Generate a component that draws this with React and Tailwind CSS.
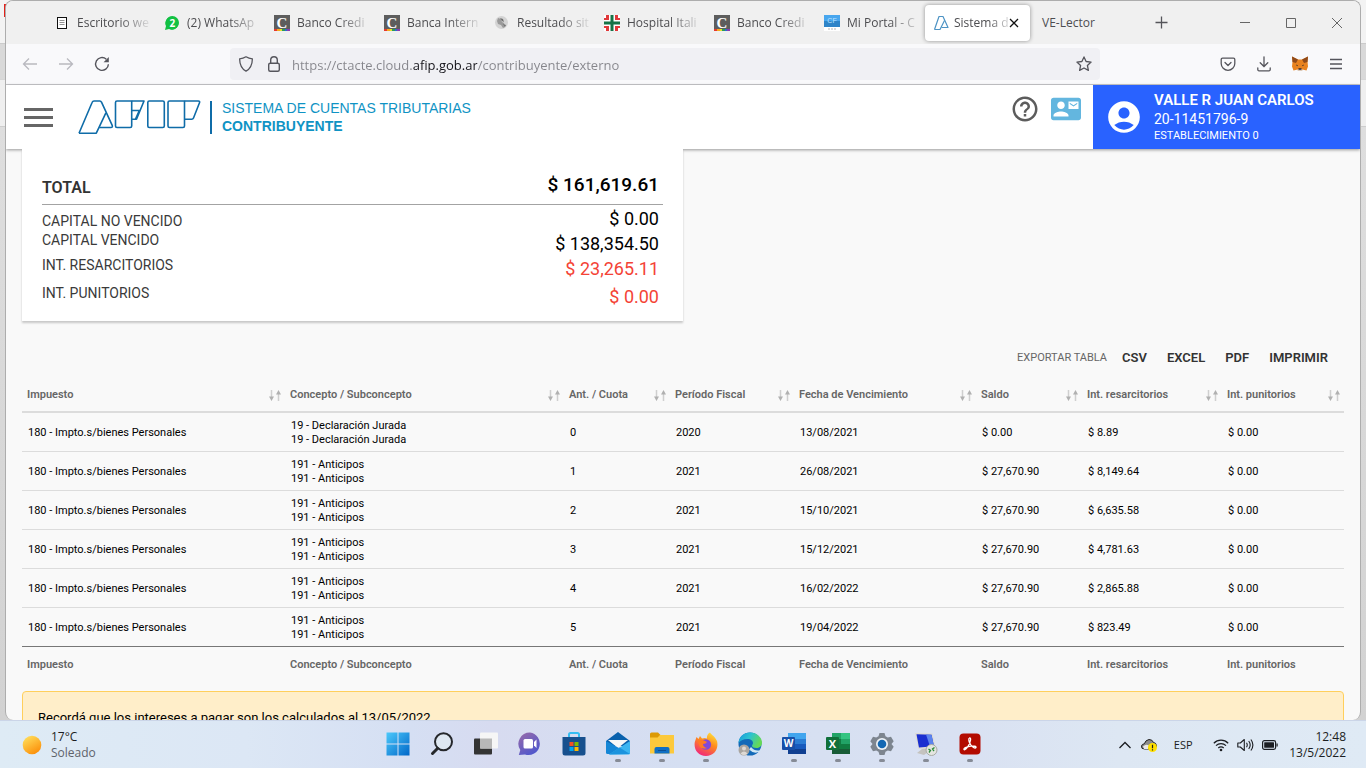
import React from "react";
import { MdHelpOutline, MdContactMail, MdAccountCircle } from "react-icons/md";

const UI = "font-['Open_Sans','Noto_Sans',sans-serif]";

/* ---------- favicons ---------- */

function DocIcon() {
  return (
    <svg width="16" height="16" viewBox="0 0 16 16" fill="none">
      <rect x="3.500" y="2.500" width="9" height="11" fill="#fff" stroke="#111" strokeWidth="1" />
      <path d="M5.500 5.500h5M5.500 7.500h5M5.500 9.500h5" stroke="#777" strokeWidth=".8" />
    </svg>
  );
}

function WhatsIcon() {
  return (
    <svg width="16" height="16" viewBox="0 0 16 16">
      <path d="M1 15l1-4a6.500 6.500 0 1 1 3 3z" fill="#12c143" />
      <circle cx="8.300" cy="7.800" r="6.700" fill="#12c143" />
      <text x="8.300" y="11.500" textAnchor="middle" fontSize="10" fontWeight="700" fill="#fff" fontFamily="Open Sans, sans-serif">2</text>
    </svg>
  );
}

function CrediIcon() {
  return (
    <svg width="16" height="16" viewBox="0 0 16 16">
      <rect width="16" height="16" fill="#5d5d5d" />
      <text x="8" y="12.500" textAnchor="middle" fontSize="15" fontWeight="700" fill="#fff" fontFamily="Liberation Serif, serif">C</text>
      <path d="M0 14h3v2H0z" fill="#e5392f" />
      <path d="M3 14h3v2H3z" fill="#f6a81c" />
      <path d="M6 14h2v2H6z" fill="#e8df2a" />
      <path d="M8 14h3v2H8z" fill="#2a9a5b" />
      <path d="M11 14h2v2h-2z" fill="#2d6bd0" />
      <path d="M13 14h3v2h-3z" fill="#8a3db0" />
    </svg>
  );
}

function GlobeIcon() {
  return (
    <svg width="16" height="16" viewBox="0 0 16 16">
      <circle cx="7.500" cy="7.500" r="6.500" fill="#d3d3d3" />
      <path d="M4 3l3 1 1 3 2 1 1 4-2 1-2-3-3-1-1-3z" fill="#9a9a9a" />
      <path d="M6 3l3 1 1 3-2-1zM9 9l3 1-1 2z" fill="#6f6f6f" />
    </svg>
  );
}

function HospitalIcon() {
  return (
    <svg width="16" height="16" viewBox="0 0 16 16">
      <rect width="16" height="16" fill="#fff" />
      <path d="M2 0h3v5H0V3h2zM11 0h3v3h2v2h-5zM0 11h5v5H2v-3H0zM11 11h5v2h-2v3h-3z" fill="#e0393b" />
      <path d="M6.500 0h3v6.500H16v3H9.500V16h-3V9.500H0v-3h6.500z" fill="#157347" />
    </svg>
  );
}

function PortalIcon() {
  return (
    <svg width="16" height="16" viewBox="0 0 16 16">
      <rect width="16" height="16" fill="#fff" />
      <rect width="16" height="6" fill="#48a6ee" />
      <rect y="6" width="16" height="6" fill="#2e84c8" />
      <text x="8" y="8" textAnchor="middle" fontSize="7" fill="#bfe4ff" fontFamily="Liberation Sans, sans-serif">CF</text>
      <path d="M4 14h2M7 14h2M10 14h2" stroke="#b5b5b5" />
    </svg>
  );
}

function AfipIcon() {
  return (
    <svg width="16" height="16" viewBox="0 0 16 16" fill="none" stroke="#4d93c4" strokeWidth="1.200" strokeLinejoin="round">
      <path d="M1.500 14.500L6 1.500h4L15 12.500H8.500" />
      <path d="M1.500 14.500H7l4.500-9" />
    </svg>
  );
}

const tabs = [
  { icon: DocIcon, text: "Escritorio we" },
  { icon: WhatsIcon, text: "(2) WhatsAp" },
  { icon: CrediIcon, text: "Banco Credi" },
  { icon: CrediIcon, text: "Banca Intern" },
  { icon: GlobeIcon, text: "Resultado sit" },
  { icon: HospitalIcon, text: "Hospital Itali" },
  { icon: CrediIcon, text: "Banco Credi" },
  { icon: PortalIcon, text: "Mi Portal - C" },
];

function TabBar() {
  return (
    <div className={`flex h-[43px] shrink-0 items-center bg-[#f0f0f0] pl-10 text-[12px] text-[#4d4d50] ${UI}`}>
      <div role="tablist" className="flex items-center">
        {tabs.map((t, i) => (
          <button key={i} role="tab" aria-selected="false" className="flex h-9 w-[110px] items-center gap-[7px] pl-2">
            <span className="shrink-0"><t.icon /></span>
            <span className="text-left whitespace-nowrap [mask-image:linear-gradient(to_right,#000_42px,transparent_76px)]">{t.text}</span>
          </button>
        ))}
        <div className="-ml-[1px] flex h-9 w-[105px] items-center rounded-[4px] bg-white pl-2 shadow-[0_0_4px_rgba(0,0,0,0.4)]">
          <button role="tab" aria-selected="true" className="flex items-center gap-[5px]">
            <span className="shrink-0"><AfipIcon /></span>
            <span className="text-left whitespace-nowrap [mask-image:linear-gradient(to_right,#000_34px,transparent_60px)]">Sistema d</span>
          </button>
          <button aria-label="Cerrar pestaña" className="mr-[11px] ml-auto">
            <svg width="10" height="10" viewBox="0 0 10 10" stroke="#111" strokeWidth="1.300"><path d="M1 1l8 8M9 1l-8 8" /></svg>
          </button>
        </div>
        <button role="tab" aria-selected="false" className="ml-3 w-[109px] text-left">VE-Lector</button>
      </div>
      <button aria-label="Nueva pestaña" className="p-[4px]">
        <svg width="13" height="13" viewBox="0 0 13 13" stroke="#55555a" strokeWidth="1.300"><path d="M6.500 0.500v12M0.500 6.500h12" /></svg>
      </button>
      <div className="ml-auto flex items-center">
        <button aria-label="Minimizar" className="flex h-8 w-[46px] items-center justify-center">
          <svg width="10" height="10" viewBox="0 0 10 10" stroke="#666"><path d="M0 4.500h10" /></svg>
        </button>
        <button aria-label="Maximizar" className="flex h-8 w-[46px] items-center justify-center">
          <svg width="10" height="10" viewBox="0 0 10 10" stroke="#666" fill="none"><path d="M.5.5h9v9h-9z" /></svg>
        </button>
        <button aria-label="Cerrar" className="flex h-8 w-[46px] items-center justify-center">
          <svg width="10" height="10" viewBox="0 0 10 10" stroke="#666"><path d="M0 0l10 10M10 0L0 10" /></svg>
        </button>
      </div>
    </div>
  );
}

function Toolbar() {
  return (
    <div className="flex h-[41px] shrink-0 items-center border-b border-[#c9c9cc] bg-[#f9f9fb] text-[#55555c]">
      <div className="flex w-[224px] shrink-0 items-center gap-5 pl-4">
        <button aria-label="Atrás" className="text-[#b9b9bf]">
          <svg width="16" height="16" viewBox="0 0 16 16" fill="none" stroke="currentColor" strokeWidth="1.300"><path d="M15 8H1.500M7 2.500L1.500 8 7 13.500" /></svg>
        </button>
        <button aria-label="Adelante" className="text-[#b9b9bf]">
          <svg width="16" height="16" viewBox="0 0 16 16" fill="none" stroke="currentColor" strokeWidth="1.300"><path d="M1 8h13.500M9 2.500L14.500 8 9 13.500" /></svg>
        </button>
        <button aria-label="Recargar">
          <svg width="16" height="16" viewBox="0 0 16 16" fill="none" stroke="currentColor" strokeWidth="1.400"><path d="M12.300 3.200A6.400 6.400 0 1 0 14.400 8.200" /><path d="M14.800 1v5.200H9.600z" fill="currentColor" stroke="none" /></svg>
        </button>
      </div>
      <div className="flex h-8 min-w-0 flex-1 items-center rounded-[4px] bg-[#f0f0f4] pr-2 pl-2">
        <svg width="16" height="16" viewBox="0 0 16 16" fill="none" stroke="currentColor" strokeWidth="1.300" strokeLinejoin="round"><path d="M8 .8c2 1.300 4.300 1.900 6.400 2-.1 5.700-1.800 10-6.400 12.400C3.400 12.800 1.700 8.500 1.600 2.800 3.700 2.700 6 2.100 8 .8z" /></svg>
        <svg className="ml-3" width="16" height="16" viewBox="0 0 16 16" fill="none" stroke="currentColor" strokeWidth="1.400"><rect x="2.700" y="7.200" width="10.600" height="8" rx="1.500" /><path d="M4.700 7V4a3.300 3.300 0 0 1 6.600 0v3" /></svg>
        <input
          aria-label="Dirección"
          readOnly
          value="https://ctacte.cloud.afip.gob.ar/contribuyente/externo"
          className={`ml-[10px] min-w-0 flex-1 bg-[linear-gradient(to_right,#85858b_121px,#15141a_121px,#15141a_185px,#85858b_185px)] bg-clip-text pt-[3px] text-[13px] text-transparent outline-none ${UI}`}
        />
        <button aria-label="Agregar a marcadores">
          <svg width="16" height="16" viewBox="0 0 16 16" fill="none" stroke="currentColor" strokeWidth="1.300" strokeLinejoin="round"><path d="M8 .9l2.100 4.600 5 .6-3.700 3.400 1 4.900L8 12l-4.400 2.400 1-4.900L.9 6.100l5-.6z" /></svg>
        </button>
      </div>
      <div className="flex w-[260px] shrink-0 items-center justify-end gap-5 pr-4">
        <button aria-label="Pocket">
          <svg width="16" height="16" viewBox="0 0 16 16" fill="none" stroke="currentColor" strokeWidth="1.300" strokeLinecap="round" strokeLinejoin="round"><path d="M2.500 2.200h11a1.300 1.300 0 0 1 1.300 1.300V7.500a6.800 6.800 0 0 1-13.600 0V3.500a1.300 1.300 0 0 1 1.300-1.300z" /><path d="M5 6.500l3 3 3-3" /></svg>
        </button>
        <button aria-label="Descargas">
          <svg width="16" height="16" viewBox="0 0 16 16" fill="none" stroke="currentColor" strokeWidth="1.300" strokeLinecap="round"><path d="M8 .8v9.500M4.200 6.800L8 10.500l3.800-3.700M1.800 12v1.500A1.200 1.200 0 0 0 3 14.800h10a1.200 1.200 0 0 0 1.200-1.300V12" /></svg>
        </button>
        <button aria-label="MetaMask">
          <svg width="16" height="16" viewBox="1 0 16 16">
            <path d="M1 .5l6 3h4l6-3-.5 5 .5 5-1.500 4-4-1-1 1.500h-3L6.500 13.500l-4 1L1 10.500l.5-5z" fill="#e8821e" />
            <path d="M1 .5l6 3-2 3.500-3.500-1zM17 .5l-6 3L13 7l3.500-1z" fill="#8f4a1a" />
            <path d="M7 13h4l.5 2h-5z" fill="#dcc9b8" />
            <path d="M7.500 12.300h3v1.500h-3zM5 8.500l2 1-1 .7zM13 8.500l-2 1 1 .7z" fill="#2b2630" />
          </svg>
        </button>
        <button aria-label="Menú">
          <svg width="16" height="16" viewBox="0 0 16 16" stroke="currentColor" strokeWidth="1.300"><path d="M2 3.500h12M2 8h12M2 12.500h12" /></svg>
        </button>
      </div>
    </div>
  );
}

function AfipLogo() {
  return (
    <svg width="124" height="36" viewBox="78 99 124 36" fill="none" stroke="#0f6ca8" strokeWidth="1.600" strokeLinejoin="round" role="img" aria-label="AFIP">
      <path d="M80 133.200L93.200 102.300q.5-1.300 1.800-1.300h5.800q1.200 0 1.700 1.200l10.600 23q1 2.300-1.300 2.300H100.300" />
      <path d="M80 133.200H97.300l9.600-20.400" />
      <path d="M118 101h14.700v25q0 1.500-1.500 1.500h-13.200q-1.500 0-1.500-1.500v-23.500q0-1.500 1.500-1.500z" />
      <path d="M132.700 101H145l-7.500 18.300h-4.800M132.700 110.500h8.200M136.500 119l3.800-8.500" />
      <rect x="148.800" y="101" width="16.500" height="26.500" rx="1.500" />
      <path d="M170.500 101h15v25q0 1.500-1.500 1.500h-13.500q-1.500 0-1.500-1.500v-23.500q0-1.500 1.500-1.500z" />
      <path d="M185.500 101h13.700q2 0 1.300 1.800l-6 15.200q-.5 1.300-1.800 1.300h-7.200" />
    </svg>
  );
}

function AppHeader() {
  return (
    <header className="flex h-16 shrink-0 bg-white shadow-[0_1px_3px_rgba(0,0,0,0.4)]">
      <div className="flex flex-1 items-center pl-[18px]">
        <button aria-label="Menú principal" className="flex w-[29px] flex-col gap-[5px]">
          <span className="h-[3px] bg-[#666]" />
          <span className="h-[3px] bg-[#666]" />
          <span className="h-[3px] bg-[#666]" />
        </button>
        <div className="ml-6"><AfipLogo /></div>
        <div className="ml-[9px] h-[33px] w-[2px] bg-[#0f6ca8]" />
        <div className="ml-[10px] font-['Liberation_Sans',Arial,sans-serif] text-[14px] leading-[18px] text-[#0f93c4]">
          <div>SISTEMA DE CUENTAS TRIBUTARIAS</div>
          <div className="font-bold">CONTRIBUYENTE</div>
        </div>
      </div>
      <div className="mr-3 flex items-start gap-[11px] pt-[9px]">
        <button aria-label="Ayuda" className="text-[#5c5c5c]"><MdHelpOutline size={30} /></button>
        <button aria-label="Contacto" className="text-[#63b6df]"><MdContactMail size={30} /></button>
      </div>
      <div className="flex w-[267px] items-center bg-[#2962ff] pl-3 text-white">
        <MdAccountCircle size={38} />
        <div className="ml-[11px]">
          <div className="text-[15px] leading-[20px] font-semibold">VALLE R JUAN CARLOS</div>
          <div className="text-[14px] leading-[18px]">20-11451796-9</div>
          <div className="text-[11px] leading-[16px]">ESTABLECIMIENTO 0</div>
        </div>
      </div>
    </header>
  );
}

function Row({ label, value, labelEnd, red, gap }) {
  return (
    <div className={`flex justify-between pr-1 ${labelEnd ? "items-end" : "items-start"} ${gap ? "mt-[3px]" : ""}`}>
      <dt className="text-[14px] leading-[19px] text-[#3a3a3a]">{label}</dt>
      <dd className={`text-[18px] leading-[25px] ${red ? "text-[#f44336]" : "text-black"}`}>{value}</dd>
    </div>
  );
}

function Summary() {
  return (
    <section className="relative z-10 w-[661px] bg-white px-5 pt-[21px] pb-3 shadow-[0_2px_2px_rgba(0,0,0,0.2)]">
      <dl>
        <div className="mb-[1px] flex items-end justify-between border-b border-[#a3a3a3] pt-[2px] pr-1 pb-[6px]">
          <dt className="text-[16px] leading-[20px] font-semibold text-[#333]">TOTAL</dt>
          <dd className="text-[19px] leading-[26px] font-medium text-black">$ 161,619.61</dd>
        </div>
        <Row label="CAPITAL NO VENCIDO" value="$ 0.00" labelEnd />
        <Row label="CAPITAL VENCIDO" value="$ 138,354.50" />
        <Row label="INT. RESARCITORIOS" value="$ 23,265.11" red />
        <Row label="INT. PUNITORIOS" value="$ 0.00" red gap />
      </dl>
    </section>
  );
}

const columns = [
  ["Impuesto", "w-[263px]"],
  ["Concepto / Subconcepto", "w-[279px]"],
  ["Ant. / Cuota", "w-[106px]"],
  ["Período Fiscal", "w-[124px]"],
  ["Fecha de Vencimiento", "w-[182px]"],
  ["Saldo", "w-[106px]"],
  ["Int. resarcitorios", "w-[140px]"],
  ["Int. punitorios", "w-[122px]"],
];

const rows = [
  ["19 - Declaración Jurada", "0", "2020", "13/08/2021", "$ 0.00", "$ 8.89", "$ 0.00"],
  ["191 - Anticipos", "1", "2021", "26/08/2021", "$ 27,670.90", "$ 8,149.64", "$ 0.00"],
  ["191 - Anticipos", "2", "2021", "15/10/2021", "$ 27,670.90", "$ 6,635.58", "$ 0.00"],
  ["191 - Anticipos", "3", "2021", "15/12/2021", "$ 27,670.90", "$ 4,781.63", "$ 0.00"],
  ["191 - Anticipos", "4", "2021", "16/02/2022", "$ 27,670.90", "$ 2,865.88", "$ 0.00"],
  ["191 - Anticipos", "5", "2021", "19/04/2022", "$ 27,670.90", "$ 823.49", "$ 0.00"],
];

function SortIcon() {
  return (
    <svg width="12" height="11" viewBox="0 0 12 11">
      <path d="M2.500 0v7M9.500 4v7" stroke="#cfcfcf" strokeWidth="1.500" />
      <path d="M0 6.500h5L2.500 11zM7 4.500h5L9.500 0z" fill="#b0b0b0" />
    </svg>
  );
}

function DebtTable() {
  return (
    <table className="w-full table-fixed border-separate border-spacing-0 text-left text-[11px] leading-[14px] text-black">
      <thead>
        <tr>
          {columns.map(([name, w]) => (
            <th key={name} scope="col" className={`${w} h-9 border-b-2 border-[#dcdcdc] pt-[2px] pr-1 pl-[5px] font-semibold text-[#666]`}>
              <button className="flex w-full items-center justify-between whitespace-nowrap">
                {name}
                <SortIcon />
              </button>
            </th>
          ))}
        </tr>
      </thead>
      <tbody>
        {rows.map((r, i) => (
          <tr key={i} className="[&>td]:border-b [&>td]:border-[#dcdcdc] [&>td]:pt-[6px] [&>td]:pb-1 [&>td]:pl-[6px] last:[&>td]:border-[#777]">
            <td>180 - Impto.s/bienes Personales</td>
            <td>{r[0]}<br />{r[0]}</td>
            {r.slice(1).map((c, j) => (
              <td key={j}>{c}</td>
            ))}
          </tr>
        ))}
      </tbody>
      <tfoot>
        <tr>
          {columns.map(([name]) => (
            <th key={name} scope="col" className="h-[34px] pt-[2px] pl-[5px] font-semibold text-[#666]">{name}</th>
          ))}
        </tr>
      </tfoot>
    </table>
  );
}

/* ---------- taskbar ---------- */

function Dot() {
  return <span className="h-[3px] w-[6px] rounded-full bg-[#868b96]" />;
}

const apps = [
  { name: "Inicio", icon: (
    <svg width="24" height="24" viewBox="0 0 24 24"><defs><linearGradient id="win" x1="0" y1="0" x2="1" y2="1"><stop offset="0" stopColor="#4cc9fb" /><stop offset="1" stopColor="#0067c8" /></linearGradient></defs><path d="M.5.500h11v11H.5zM12.500.500h11v11h-11zM.5 12.500h11v11H.5zM12.500 12.500h11v11h-11z" fill="url(#win)" /></svg>
  ) },
  { name: "Buscar", icon: (
    <svg width="24" height="24" viewBox="0 0 24 24" fill="none" stroke="#25272b" strokeLinecap="round"><circle cx="13.500" cy="9.800" r="8.500" strokeWidth="2" fill="#dfe8f2" /><path d="M7.500 16.500L2.500 21.500" strokeWidth="3" /></svg>
  ) },
  { name: "Vista de tareas", icon: (
    <svg width="24" height="24" viewBox="0 0 24 24"><rect y="6.500" width="18" height="16" rx="1" fill="#343434" /><rect x="6" y=".5" width="18" height="16" rx="1" fill="#f6f6f6" /><path d="M6 6.500h12v10H6z" fill="#b8b8b8" /></svg>
  ) },
  { name: "Chat", icon: (
    <svg width="24" height="24" viewBox="0 0 24 24"><defs><linearGradient id="chat" x1="0" y1="0" x2=".6" y2="1"><stop offset="0" stopColor="#9a6ba8" /><stop offset="1" stopColor="#5158cc" /></linearGradient></defs><path d="M12 .5A11.500 11.300 0 1 1 7 22.500L.8 23l1.500-5A11.500 11.300 0 0 1 12 .5z" fill="url(#chat)" /><rect x="5.500" y="7" width="9.500" height="9.500" rx="1.500" fill="#fff" /><path d="M16 10l2.500-2.500v8.500L16 13.500z" fill="#fff" /></svg>
  ) },
  { name: "Microsoft Store", icon: (
    <svg width="24" height="24" viewBox="0 0 24 24"><path d="M7 6V2.500Q7 1 8.500 1h7Q17 1 17 2.500V6" fill="none" stroke="#35bdf2" strokeWidth="2" /><path d="M.5 5h23v16q0 2.500-2.500 2.500H3Q.5 23.500.5 21z" fill="#17508e" /><path d="M7.500 10h4v4h-4z" fill="#f25022" /><path d="M12.500 10h4v4h-4z" fill="#7fba00" /><path d="M7.500 15h4v4h-4z" fill="#00a4ef" /><path d="M12.500 15h4v4h-4z" fill="#ffb900" /></svg>
  ) },
  { name: "Correo", open: true, icon: (
    <svg width="24" height="24" viewBox="0 0 24 24"><path d="M0 9L12 0l12 9v5H0z" fill="#0a61ad" /><path d="M2 8h20L12 16z" fill="#f7f7f7" /><path d="M0 9l24 13H1.500Q0 22 0 20.500z" fill="#1586d6" /><path d="M24 9L3 22.500h19.500q1.500 0 1.500-1.500z" fill="#3cb5f1" /><path d="M3 22.500L13.500 15.500 24 22z" fill="#1b93de" /></svg>
  ) },
  { name: "Explorador de archivos", open: true, icon: (
    <svg width="24" height="24" viewBox="0 0 24 24"><path d="M0 2q0-1.500 1.500-1.500H8L11 3.500V8H0z" fill="#dc9a05" /><path d="M0 5.500h7.500L10 3h14v18.500H0z" fill="#fcc93c" /><path d="M4.500 21.500V17q0-2 2-2h11q2 0 2 2v4.500z" fill="#0f6fc4" /><path d="M8 18.500h8" stroke="#0a4f94" /></svg>
  ) },
  { name: "Firefox", open: true, icon: (
    <svg width="24" height="24" viewBox="0 0 24 24"><defs><linearGradient id="fx" x1=".8" y1="0" x2=".3" y2="1"><stop offset="0" stopColor="#ffe23a" /><stop offset=".45" stopColor="#ff8a1e" /><stop offset="1" stopColor="#f0257e" /></linearGradient></defs><path d="M16 .5c1 2 5 4 7 8.500 2 8-3 15-11 15S-.5 17.500.800 10L2.500 5l2 2L6 4l2 2.500q3-1 5 0C12.500 4 14 1.500 16 .5z" fill="url(#fx)" /><circle cx="11.800" cy="12.500" r="5.300" fill="#8148d8" /><path d="M4 9q4-2 7 0l2 1q-1 2-4 2 0 3 4 4-6 2-8-3z" fill="#ff7a24" /></svg>
  ) },
  { name: "Microsoft Edge", icon: (
    <svg width="24" height="24" viewBox="0 0 24 24"><defs><linearGradient id="edge" x1="0" y1="0" x2="1" y2=".4"><stop offset="0" stopColor="#1695dc" /><stop offset=".5" stopColor="#2cc3d0" /><stop offset="1" stopColor="#65d957" /></linearGradient></defs><circle cx="12" cy="12" r="11.500" fill="#1269b8" /><path d="M.5 11C1 4.500 6 .5 12 .5c7 0 12 5 12 10 0 4-3 5.500-5.500 5.500s-4.500-.8-4.500-2 1-1.500 1-3c0-2-2-4-5.500-4C5 7 2 9 .5 11z" fill="url(#edge)" /><path d="M13 15q4 5 10 3l-1 1.500q-6 3-11-2z" fill="#cfe6f4" /><circle cx="6" cy="18" r="5.500" fill="#a9a5a0" /><circle cx="6" cy="16.500" r="2" fill="#ddd9d4" /><path d="M2.500 21.500q3.500-4 7 0-3.500 3-7 0z" fill="#ddd9d4" /></svg>
  ) },
  { name: "Word", open: true, icon: (
    <svg width="24" height="24" viewBox="0 0 24 24"><path d="M6 1h18v6H6z" fill="#41a5ee" /><path d="M6 7h18v5H6z" fill="#2b7cd3" /><path d="M6 12h18v5H6z" fill="#185abd" /><path d="M6 17h18v5H6z" fill="#103f91" /><rect y="5" width="13" height="13" rx="1" fill="#174fa8" /><text x="6.500" y="15.300" textAnchor="middle" fontSize="10" fontWeight="700" fill="#fff" fontFamily="Open Sans, sans-serif">W</text></svg>
  ) },
  { name: "Excel", open: true, icon: (
    <svg width="24" height="24" viewBox="0 0 24 24"><path d="M6 1h9v6H6z" fill="#21a366" /><path d="M15 1h9v6h-9z" fill="#33c481" /><path d="M6 7h9v5H6z" fill="#107c41" /><path d="M15 7h9v5h-9z" fill="#21a366" /><path d="M6 12h18v5H6z" fill="#107c41" /><path d="M6 17h18v5H6z" fill="#185c37" /><rect y="5" width="13" height="13" rx="1" fill="#10703a" /><text x="6.500" y="15.500" textAnchor="middle" fontSize="11" fontWeight="700" fill="#fff" fontFamily="Open Sans, sans-serif">X</text></svg>
  ) },
  { name: "Configuración", open: true, icon: (
    <svg width="24" height="24" viewBox="0 0 24 24"><path d="M9.500 1h5l1 3.200 2.300 1.300L21 4.800l2.700 4.500-2.200 2.700 2.200 2.700-2.700 4.500-3.200-.7-2.300 1.300-1 3.200h-5l-1-3.200-2.300-1.300-3.200.7L.3 14.700 2.500 12 .3 9.300 3 4.800l3.200.7 2.300-1.300z" fill="#7d858f" /><circle cx="12" cy="12" r="6" fill="#eef2f6" /><circle cx="12" cy="12" r="4.300" fill="#1468b3" /></svg>
  ) },
  { name: "Escritorio remoto", open: true, icon: (
    <svg width="24" height="24" viewBox="0 0 24 24"><path d="M1 1l17.500.5 3 14-17 1.500z" fill="#dcdad4" /><path d="M2.500 2.200L17.500 2.700l2.500 11.500L5 15.500z" fill="#1a2fd0" /><path d="M12 2.500l5.500.2L20 14.200l-4 .3z" fill="#5b83ee" /><path d="M8 17l5-.5 1 3.500-4 3-7-2z" fill="#c4c3bf" /><circle cx="17.500" cy="18" r="5.500" fill="#e4e6e0" stroke="#a8aaa4" /><path d="M14.500 17l2 1.500-1.500 2M20.500 15.500L18.500 17l1.500 2" stroke="#2b8a3a" fill="none" strokeWidth="1.300" /></svg>
  ) },
  { name: "Adobe Acrobat", open: true, icon: (
    <svg width="24" height="24" viewBox="0 0 24 24"><rect x="1.500" y="1.500" width="21" height="21" rx="4" fill="#b30b00" /><path d="M11.500 6c2-.5 1 4-1 7.500-1.500 2.500-3.500 5-4.500 4-1-1.500 4-3 7-3.300 3-.3 5.500 0 5 1.300-.8 1.500-4-.5-5.500-3C11 10 10 6.500 11.500 6z" fill="none" stroke="#fff" strokeWidth="1.300" /></svg>
  ) },
];

function Taskbar() {
  return (
    <footer className={`grid h-12 shrink-0 grid-cols-[1fr_auto_1fr] border-t border-[#cbd5e8] bg-[linear-gradient(90deg,#deebf5_0%,#dce7f5_18%,#d5dff3_30%,#d7dbf0_36%,#d5dff2_50%,#d9e1f2_70%,#dde7f3_82%,#dfeaf5_100%)] text-[12px] leading-[16px] text-[#1c1e22] ${UI}`}>
      <div className="flex items-center pl-[22px]">
        <button className="flex items-center gap-[9px] text-left">
          <svg width="20" height="20" viewBox="0 0 20 20"><defs><linearGradient id="sun" x1=".2" y1="0" x2=".8" y2="1"><stop offset="0" stopColor="#ffdf5c" /><stop offset="1" stopColor="#fb8a05" /></linearGradient></defs><circle cx="10" cy="10" r="9.300" fill="url(#sun)" /></svg>
          <span>
            <span className="block">17°C</span>
            <span className="block text-[#5e636b]">Soleado</span>
          </span>
        </button>
      </div>
      <nav className="flex pl-[2px]">
        {apps.map((a) => (
          <button key={a.name} aria-label={a.name} className="flex w-11 flex-col items-center gap-[3px] pt-[11px]">
            {a.icon}
            {a.open && <Dot />}
          </button>
        ))}
      </nav>
      <div className="flex items-center justify-end pr-5">
        <button aria-label="Iconos ocultos">
          <svg width="12" height="8" viewBox="0 0 12 8" fill="none" stroke="#1c1e22" strokeWidth="1.300"><path d="M.5 7L6 1.500 11.500 7" /></svg>
        </button>
        <button aria-label="OneDrive" className="ml-[10px]">
          <svg width="16" height="14" viewBox="0 0 16 14"><path d="M3.500 11Q0 11 .5 8q.5-2 2.800-2.200Q4.500 2 8 1.500q3.500 0 4.500 3 2.500.3 2.800 2.500V9l-4 2z" fill="#8c8c8c" stroke="#222" /><path d="M2 8.500q3-3 6-1l-1 3.500H3z" fill="#e9e9e9" /><circle cx="11.500" cy="9.500" r="4.500" fill="#ffe000" /><path d="M11.500 6.800v3.500M11.500 11.200v1.200" stroke="#222" strokeWidth="1.200" /></svg>
        </button>
        <button className="ml-4 w-5 text-[11px]">ESP</button>
        <button aria-label="Red, volumen y batería" className="ml-5 flex items-center gap-2">
          <svg width="16" height="14" viewBox="0 0 16 14" fill="none" stroke="#1c1e22" strokeWidth="1.200"><path d="M.8 5.200a10.200 10.200 0 0 1 14.400 0M3 7.700a7 7 0 0 1 10 0M5.300 10a3.800 3.800 0 0 1 5.400 0" /><circle cx="8" cy="12" r="1.300" fill="#1c1e22" stroke="none" /></svg>
          <svg width="17" height="14" viewBox="0 0 17 14" fill="none" stroke="#1c1e22" strokeWidth="1.100" strokeLinejoin="round"><path d="M.8 5h2.500l4-3.500v11l-4-3.500H.8zM9.500 4.800q1.500 2.200 0 4.400M11.700 3q3 4 0 8M13.900 1.500q4 5.500 0 11" /></svg>
          <svg width="16" height="10" viewBox="0 0 16 10"><rect x=".6" y=".6" width="13" height="8.800" rx="1.800" fill="none" stroke="#1c1e22" strokeWidth="1.200" /><rect x="2.200" y="2.200" width="9.800" height="5.600" rx=".5" fill="#1c1e22" /><path d="M14.500 3.500h1.200v3h-1.200z" fill="#1c1e22" /></svg>
        </button>
        <button className="ml-[11px] text-right">
          <span className="block">12:48</span>
          <span className="block">13/5/2022</span>
        </button>
      </div>
    </footer>
  );
}

export default function App() {
  return (
    <div className="flex h-screen flex-col overflow-hidden font-['Roboto',sans-serif]">
      <div className="relative min-h-0 flex-1 bg-[linear-gradient(180deg,#f3f3f3_43px,#bdbdbd_43px,#d9d9d9_44px,#d9d9d9_79px,#bdbdbd_79px,#efefef_80px,#efefef_126px,#bdbdbd_126px,#dedede_127px,#d2d2d2_100%)] px-[5px]">
        <div className="absolute top-1 left-1 h-[13px] w-[2px] bg-[#e32119]" />
        <div className="relative flex h-full flex-col overflow-hidden rounded-lg border-x border-t border-[#adadad] bg-[#f9f9f9]">
          <TabBar />
          <Toolbar />
          <AppHeader />
          <main className="px-4">
            <Summary />
            <div className="mt-[25px] flex items-center justify-end gap-5 pr-4 text-[13px] leading-[24px] font-semibold text-[#333]">
              <span className="-mr-[5px] text-[11px] font-normal text-[#666]">EXPORTAR TABLA</span>
              <button>CSV</button>
              <button>EXCEL</button>
              <button>PDF</button>
              <button>IMPRIMIR</button>
            </div>
            <div className="mt-[7px]">
              <DebtTable />
            </div>
            <p className="mt-[10px] rounded-[4px] border border-[#ffcf5c] bg-[#ffeec9] px-[15px] py-4 text-[13px] leading-[20px] text-black">
              Recordá que los intereses a pagar son los calculados al 13/05/2022
            </p>
          </main>
        </div>
      </div>
      <Taskbar />
    </div>
  );
}
